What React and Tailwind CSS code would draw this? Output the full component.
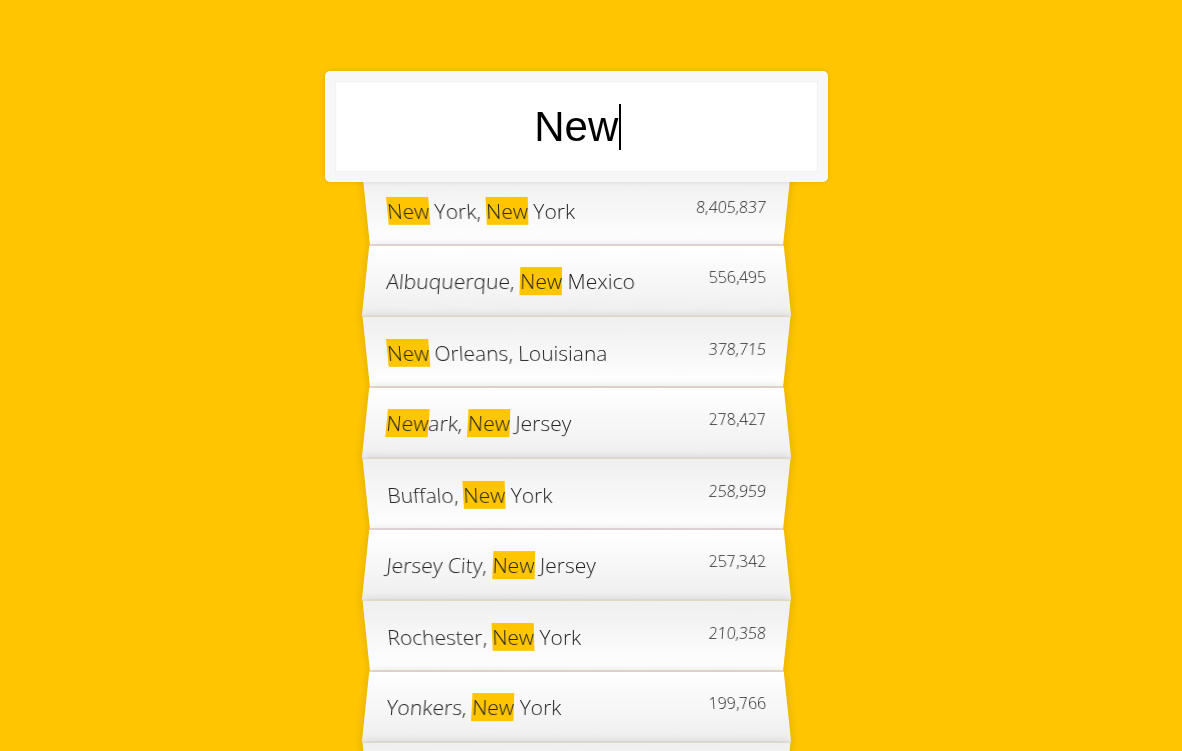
import React from 'react';

const cities = [
  { city: 'New York', state: 'New York', population: '8,405,837' },
  { city: 'Albuquerque', state: 'New Mexico', population: '556,495' },
  { city: 'New Orleans', state: 'Louisiana', population: '378,715' },
  { city: 'Newark', state: 'New Jersey', population: '278,427' },
  { city: 'Buffalo', state: 'New York', population: '258,959' },
  { city: 'Jersey City', state: 'New Jersey', population: '257,342' },
  { city: 'Rochester', state: 'New York', population: '210,358' },
  { city: 'Yonkers', state: 'New York', population: '199,766' },
  { city: 'Paterson', state: 'New Jersey', population: '145,948' },
];

const query = 'New';

// wrap every match of the query in a yellow highlight
const highlight = (text) => {
  const parts = text.split(new RegExp(`(${query})`, 'gi'));
  return parts.map((part, i) =>
    part.toLowerCase() === query.toLowerCase() ? (
      <span key={i} className="bg-[#ffc600]">{part}</span>
    ) : (
      <React.Fragment key={i}>{part}</React.Fragment>
    )
  );
};

const Suggestion = ({ item, index }) => {
  const odd = index % 2 === 0;
  return (
    <li
      className={
        odd
          ? 'flex shrink-0 justify-between px-[21px] pt-[22px] pb-[20px] border-b border-[#D8D8D8] shadow-[0_0_10px_rgba(0,0,0,0.14)] bg-linear-to-t from-white to-[#EFEFEF] transform-[perspective(105px)_rotateX(-3deg)_translateY(3px)]'
          : 'flex shrink-0 justify-between px-[21px] pt-[22px] pb-[20px] border-b border-[#D8D8D8] shadow-[0_0_10px_rgba(0,0,0,0.14)] bg-linear-to-b from-white to-[#EFEFEF] transform-[perspective(105px)_rotateX(3deg)_translateY(2px)_scale(1.001)]'
      }
    >
      <span className="text-[21px] leading-[28px]">
        {highlight(item.city)}, {highlight(item.state)}
      </span>
      <span className="text-[15.75px] leading-[21px]">{item.population}</span>
    </li>
  );
};

export default function App() {
  return (
    <div className="h-[751px] overflow-hidden bg-[#ffc600] flex items-start justify-center pr-[29px] pt-[71px] font-['Open_Sans',sans-serif] font-light text-[#222]">
      <form className="w-[421px] shrink-0 flex flex-col">
        <div className="relative z-10 shrink-0 -mx-[41px] -mb-[10px] h-[111px] rounded-[5px] border-[10.5px] border-[#F7F7F7] bg-white shadow-[0_0_5px_rgba(0,0,0,0.12),inset_0_0_2px_rgba(0,0,0,0.19)] flex items-center justify-center">
          <div className="flex items-center font-['Liberation_Sans',Arial,sans-serif] font-normal text-[42px] leading-[48px] text-black pl-[2px]">
            New
            <span className="w-[1.5px] h-[46px] bg-black ml-[1px]"></span>
          </div>
        </div>
        <ul className="relative flex flex-col">
          {cities.map((item, i) => (
            <Suggestion key={item.city} item={item} index={i} />
          ))}
        </ul>
      </form>
    </div>
  );
}
